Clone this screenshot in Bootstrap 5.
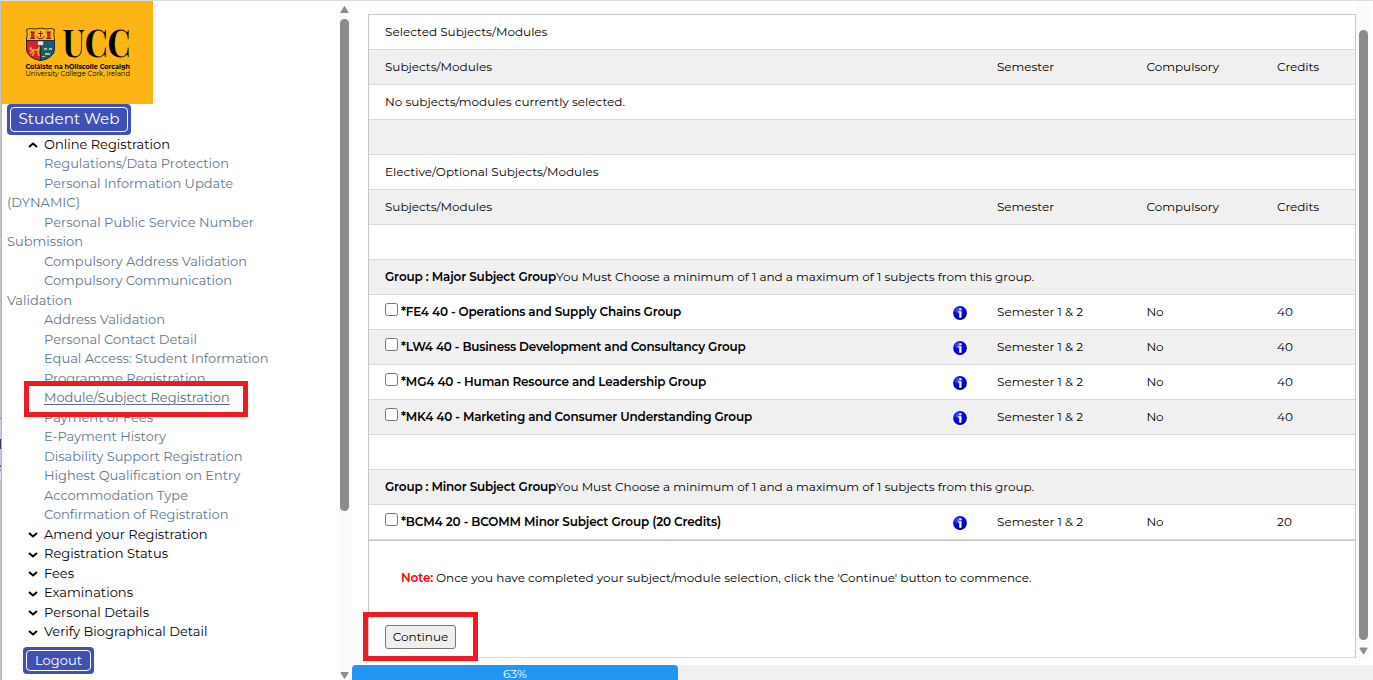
<!DOCTYPE html>
<html lang="en">
<head>
<meta charset="utf-8">
<meta name="viewport" content="width=device-width, initial-scale=1">
<title>Student Web - Module/Subject Registration</title>
<link href="https://cdn.jsdelivr.net/npm/bootstrap@5.3.0/dist/css/bootstrap.min.css" rel="stylesheet">
<style>
body{font-family:Montserrat,Inter,sans-serif;font-size:12px;color:#000;background:#fff}
.shell{height:680px;border-top:1px solid #ddd}
.edge{width:2px;background:#c4c4c4;border-right:1px solid #b5b5b5}
.edge i{display:block;height:62px;margin-top:417px;background:linear-gradient(#7a8fb0 1px,#cbd0de 1px 21px,#4a2a63 21px 31px,#c5cbdc 31px 47px,#4d6396 47px 49px,#c5cbdc 49px 52px,#4d6396 52px 53px,#ddd 53px)}
.side{width:337px}
.logo{display:block;width:151px;height:103px}
.tag{background:#3f51b5;color:#fff;border-radius:4px;padding:3px;text-decoration:none;display:block}
.tag span{display:flex;align-items:center;justify-content:center;border:1px solid #fff;border-radius:4px;height:100%}
.tag-title{width:124px;height:31px;margin-left:5px;font-size:15.2px}
.tag-out{width:71px;height:27px;margin:5.5px 0 0 21px;font-size:13px}
.menu{font-size:13px;line-height:19.5px;height:507px;margin-top:-.5px}
.menu li{height:19.5px;padding-left:42px;position:relative;white-space:nowrap}
.menu li.wrapped{padding-left:5px}
.menu a{color:#5f788c;text-decoration:none}
.menu .top a{color:#000}
.menu .current a{text-decoration:underline;text-underline-offset:2px;color:#566d82}
.menu svg{position:absolute;left:25.5px;top:6.5px}
.ring{position:absolute;border:5px solid #ed1c24;pointer-events:none;z-index:3}
.ring-menu{left:22px;top:-7px;width:224px;height:36px}
.ring-menu-fill{background:#fff;z-index:1}
.menu .current a{position:relative;z-index:4}
.ring-btn{left:-22px;top:-13px;width:115px;height:49px}
.track{background:#fbfbfb;flex:none}
.thumb{width:10px;background:#8b8b8b;border-radius:5px}
.pane{height:657px}
.sheet{width:988px;height:644px;margin:13px 0 0 16px;border:1px solid #c8c8c8;border-bottom-color:#ddd}
.sheet .grid{table-layout:fixed;width:986px;margin:-1px 0 0;--bs-table-bg:transparent;border-color:#ddd}
.grid td{height:35px;padding:0 0 1px 16px;border-bottom:1px solid #dadada;vertical-align:middle;line-height:18px;color:#000;white-space:nowrap}
.grid tr:first-child td{border-top:1px solid #c8c8c8}
.grid tr:nth-child(even) td{background:#f0f0f0}
.grid b,.note b{font-weight:600}
.grid input{appearance:none;width:13px;height:13px;border:1px solid #767676;border-radius:2.5px;background:#fff;margin:0 3px 0 0;vertical-align:-1px;position:relative;top:-1px}
.grid .info{display:block;margin-top:3px}
.note{border-top:1px solid #c8c8c8;padding:28px 0 0 32px;line-height:18px;height:85px}
.go{display:block;width:71px;height:24px;border:1px solid #767676;border-radius:3px;background:#efefef;padding:0;line-height:20px;color:#000}
.meter{height:15px;margin-top:7px;background:#f0f0f0}
.meter div{width:326px;height:100%;background:#2196f3;color:#fff;border-radius:4px 4px 0 0;text-align:center;line-height:17px;overflow:hidden}
[data-w]{display:inline-block;white-space:pre}
</style>
</head>
<body class="overflow-hidden">
<div class="shell d-flex overflow-hidden">
  <div class="edge flex-shrink-0"><i></i></div>
  <aside class="side flex-shrink-0">
    <svg class="logo" viewBox="0 0 151 103">
      <rect width="151" height="103" fill="#fdb515"/>
      <g stroke="#2a2320" stroke-width=".9">
        <path d="M24.500 28.500Q28 26.500 32 28Q39 26.500 45 28Q49 26.500 52.500 28.500Q51 33 52.500 38V48Q52 57 38.500 59.500Q25 57 24.500 48V38Q26 33 24.500 28.500Z" fill="#fdb515"/>
        <path d="M24.500 39.500H38.500V59.500Q25 57 24.500 48Z" fill="#d8232f"/>
        <path d="M38.500 39.500H52.500V48Q52 57 38.500 59.500Z" fill="#155c7c"/>
      </g>
      <path d="M29 31h3.500v6H29zM45 31h3.500v6H45z" fill="#c52a2d"/>
      <path d="M28 31h5M28 37.500h5M44 31h5M44 37.500h5M34.500 35l2 2.500h4l2-2.500M38.500 30v6M36 32.500h5" stroke="#8a2015" fill="none"/>
      <path d="M35.500 40h6v4.500h-6z" fill="#e9e3d3" stroke="#333" stroke-width=".5"/>
      <path d="M28 47l3 2h4l2-2-1 5 1 3M28 53l2-3 2 2-2 3M29 46l-1 3" stroke="#f8b51c" stroke-width="1.300" fill="none"/>
      <path d="M42 47h3v2h-3zM47 47h3v2h-3zM43 52h5v2h-5zM40 55h3v1h-3z" fill="#c8bd67"/>
      <text x="60.500" y="56" font-family="'Playfair Display','Liberation Serif',serif" font-weight="700" font-size="37" textLength="68" lengthAdjust="spacingAndGlyphs">UCC</text>
      <text x="23.500" y="67.700" font-weight="700" font-size="6.400" textLength="104.500" lengthAdjust="spacingAndGlyphs">Coláiste na hOllscoile Corcaigh</text>
      <text x="23.500" y="75" font-weight="400" font-size="6.400" textLength="104.500" lengthAdjust="spacingAndGlyphs">University College Cork, Ireland</text>
    </svg>
    <div class="tag tag-title"><span><em class="fst-normal" data-w="101">Student Web</em></span></div>
    <ul class="menu list-unstyled mb-0" id="menu"></ul>
    <a class="tag tag-out" href="#"><span><em class="fst-normal" data-w="47">Logout</em></span></a>
  </aside>
  <div class="track d-flex flex-column" style="width:13px;padding-left:1px">
    <svg width="9" height="18" viewBox="0 0 9 18"><path d="M4.500 5.500L8.200 11.500H.8Z" fill="#8b8b8b" stroke="#8b8b8b" stroke-linejoin="round"/></svg>
    <div class="thumb" style="height:492px;width:9px"></div>
    <svg class="mt-auto" width="9" height="9" viewBox="0 0 9 9"><path d="M4.500 7.500L8.200 1.500H.8Z" fill="#8b8b8b" stroke="#8b8b8b" stroke-linejoin="round"/></svg>
  </div>
  <main class="flex-grow-1">
    <div class="pane d-flex">
      <section class="sheet flex-shrink-0">
        <table class="table grid">
          <colgroup><col style="width:568px"><col style="width:44px"><col style="width:149.500px"><col style="width:130.500px"><col></colgroup>
          <tbody id="rows"></tbody>
        </table>
        <div class="note"><b style="color:#f00" data-w="32">Note:</b><span style="margin-left:3px" data-w="595.500">Once you have completed your subject/module selection, click the 'Continue' button to commence.</span></div>
        <div class="position-relative ms-3"><button class="go" type="button"><span data-w="55.500">Continue</span></button><div class="ring ring-btn"></div></div>
      </section>
      <div class="track d-flex flex-column" style="width:15px;padding-left:3px">
        <div class="thumb" style="height:610px;width:9px;margin-top:29px"></div>
        <svg style="margin-top:6px" width="9" height="10" viewBox="0 0 9 10"><path d="M4.500 8L8.200 2H.8Z" fill="#8b8b8b" stroke="#8b8b8b" stroke-linejoin="round"/></svg>
      </div>
    </div>
    <div class="meter"><div><span data-w="24">63%</span></div></div>
  </main>
</div>
<svg width="0" height="0" class="position-absolute"><defs>
  <radialGradient id="ball" cx=".35" cy=".3" r=".75"><stop offset="0" stop-color="#5a62ff"/><stop offset=".4" stop-color="#0808f4"/><stop offset=".75" stop-color="#0000c4"/><stop offset="1" stop-color="#00003c"/></radialGradient>
</defs></svg>
<script src="https://cdn.jsdelivr.net/npm/bootstrap@5.3.0/dist/js/bootstrap.bundle.min.js"></script>
<script>
// kind: u = open heading, d = closed heading, s = sub item, w = wrapped second line, c = current page
const menu = [['u','Online Registration',126],['s','Regulations/Data Protection',185],['s','Personal Information Update',189],['w','(DYNAMIC)',73],
['s','Personal Public Service Number',210],['w','Submission',76],['s','Compulsory Address Validation',203],['s','Compulsory Communication',188],['w','Validation',65],
['s','Address Validation',121],['s','Personal Contact Detail',153],['s','Equal Access: Student Information',224.5],['s','Programme Registration',161.5],
['c','Module/Subject Registration',185.7],['s','Payment of Fees',109],['s','E-Payment History',122],['s','Disability Support Registration',198.5],
['s','Highest Qualification on Entry',196.2],['s','Accommodation Type',144],['s','Confirmation of Registration',184.5],
['d','Amend your Registration',163.5],['d','Registration Status',124],['d','Fees',30],['d','Examinations',89],['d','Personal Details',105],['d','Verify Biographical Detail',163.5]];
const cls = {u:'top',d:'top',s:'',w:'wrapped',c:'current'};
document.getElementById('menu').innerHTML = menu.map(([k,t,w]) => {
  const arrow = k==='u' ? 'M1 6L5 2.500L9 6' : k==='d' ? 'M1 2L5 5.500L9 2' : '';
  return `<li class="${cls[k]}">` + (arrow ? `<svg width="10" height="8"><path d="${arrow}" fill="none" stroke="#000" stroke-width="1.900"/></svg>` : '') +
    `<a href="#" data-w="${w}">${t}</a>` + (k==='c' ? '<div class="ring ring-menu ring-menu-fill"></div>' : '') + '</li>';
}).join('');
const tx = (t,w) => `<span data-w="${w}">${t}</span>`;
const head = `<tr><td>${tx('Subjects/Modules',107)}</td><td></td><td>${tx('Semester',57)}</td><td>${tx('Compulsory',72.5)}</td><td>${tx('Credits',42)}</td></tr>`;
const full = s => `<tr><td colspan="5">${s}</td></tr>`;
const info = '<svg class="info" width="14" height="14" viewBox="0 0 14 14"><rect width="14" height="14" fill="#fff"/><circle cx="7" cy="7" r="6.900" fill="url(#ball)"/><path d="M6.200 2.200h2.300v2H6.200zM5 5.200h3.500v6.600H6.200V6.500H5z" fill="#fff"/></svg>';
const item = (t,w,c) => `<tr><td><input type="checkbox"><b data-w="${w}">${t}</b></td><td>${info}</td><td>${tx('Semester 1 &amp; 2',86)}</td><td>${tx('No',17)}</td><td>${tx(c,c==='40'?16:15)}</td></tr>`;
const group = (g,w) => full(`<b data-w="${w}">Group : ${g} Subject Group</b>` + tx('You Must Choose a minimum of 1 and a maximum of 1 subjects from this group.',478));
document.getElementById('rows').innerHTML = full(tx('Selected Subjects/Modules',162.5)) + head + full(tx('No subjects/modules currently selected.',240)) + full('') +
  full(tx('Elective/Optional Subjects/Modules',213.5)) + head + full('') + group('Major',171) +
  item('*FE4 40 - Operations and Supply Chains Group',280,'40') + item('*LW4 40 - Business Development and Consultancy Group',344.5,'40') +
  item('*MG4 40 - Human Resource and Leadership Group',305,'40') + item('*MK4 40 - Marketing and Consumer Understanding Group',351,'40') +
  full('') + group('Minor',171) + item('*BCM4 20 - BCOMM Minor Subject Group (20 Credits)',320,'20');
document.querySelectorAll('[data-w]').forEach(e => {
  const gap = (e.dataset.w - e.getBoundingClientRect().width) / e.textContent.length;
  e.style.letterSpacing = gap.toFixed(3) + 'px';
});
</script>
</body>
</html>
